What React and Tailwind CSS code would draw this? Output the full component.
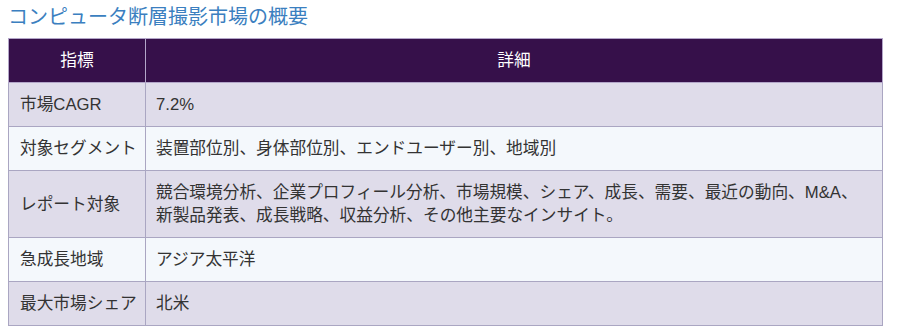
const rows = [
  ["市場CAGR", "7.2%"],
  ["対象セグメント", "装置部位別、身体部位別、エンドユーザー別、地域別"],
  [
    "レポート対象",
    "競合環境分析、企業プロフィール分析、市場規模、シェア、成長、需要、最近の動向、M&A、新製品発表、成長戦略、収益分析、その他主要なインサイト。",
  ],
  ["急成長地域", "アジア太平洋"],
  ["最大市場シェア", "北米"],
];

export default function App() {
  return (
    <div className="min-h-[336px] bg-white px-2 pt-[3px] font-['Liberation_Sans','Noto_Sans_CJK_JP',sans-serif]">
      <h2 className="text-[20px] leading-[28px] text-[#3b7fc0]">
        コンピュータ断層撮影市場の概要
      </h2>
      <table className="mt-[7px] w-[875px] border-collapse text-[16.7px] leading-[23px] text-[#333]">
        <thead>
          <tr className="bg-[#36104a] text-white">
            <th className="h-[44px] w-[137px] border border-[#b3a6c9] px-[10px] py-0 font-normal">指標</th>
            <th className="h-[44px] border border-[#b3a6c9] px-[10px] py-0 font-normal">詳細</th>
          </tr>
        </thead>
        <tbody>
          {rows.map(([k, v], i) => (
            <tr key={k} className={i % 2 === 0 ? "bg-[#dfdcea]" : "bg-[#f4f8fc]"}>
              <td className="border border-[#aaa6c2] py-[10px] pl-[11px] pr-[4px] whitespace-nowrap">{k}</td>
              <td className="border border-[#aaa6c2] px-[10px] py-[10px]">{v}</td>
            </tr>
          ))}
        </tbody>
      </table>
    </div>
  );
}
